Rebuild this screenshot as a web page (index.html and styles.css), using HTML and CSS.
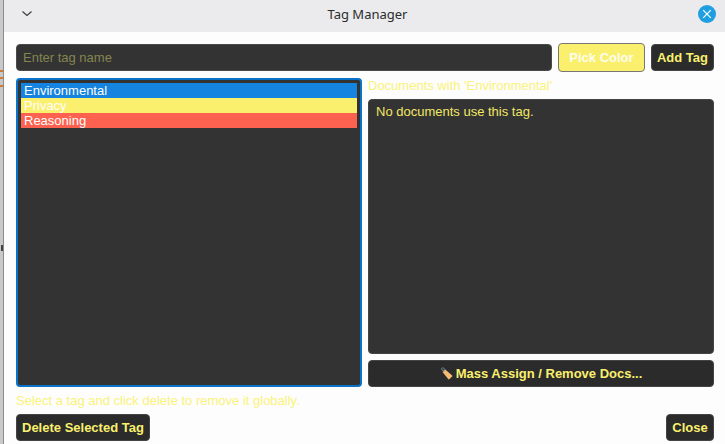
FILE: index.html
```html
<!DOCTYPE html>
<html lang="en">
<head>
    <meta charset="UTF-8">
    <title>Tag Manager</title>
    <link rel="stylesheet" href="styles.css">
</head>
<body>
    <div class="behind">
        <span class="behind-mark mark-1"></span>
        <span class="behind-mark mark-2"></span>
        <span class="behind-mark mark-3"></span>
        <span class="behind-blot"></span>
    </div>
    <div class="window">
        <div class="titlebar">
            <svg class="chevron" width="14" height="8" viewBox="0 0 14 8">
                <path d="M2.5 1.5 L7 5.5 L11.5 1.5" fill="none" stroke="#3a3a3a" stroke-width="1.1"/>
            </svg>
            <div class="title">Tag Manager</div>
            <div class="close-x">
                <svg width="18" height="18" viewBox="0 0 18 18">
                    <circle cx="9" cy="9" r="9" fill="#1f9fe0"/>
                    <path d="M5.2 5.2 L12.8 12.8 M12.8 5.2 L5.2 12.8" stroke="#fff" stroke-width="1.2"/>
                </svg>
            </div>
        </div>
        <div class="content">
            <div class="top-row">
                <input class="tag-input" type="text" placeholder="Enter tag name">
                <button class="button pick-btn">Pick Color</button>
                <button class="button">Add Tag</button>
            </div>
            <div class="columns">
                <div class="tag-list">
                    <div class="tag tag-blue">Environmental</div>
                    <div class="tag tag-yellow">Privacy</div>
                    <div class="tag tag-red">Reasoning</div>
                </div>
                <div class="docs">
                    <div class="docs-label">Documents with 'Environmental'</div>
                    <div class="docs-box">No documents use this tag.</div>
                    <button class="button mass-btn">
                        <svg class="tag-icon" width="13" height="13" viewBox="0 0 13 13">
                            <path d="M2.5 5 L5.2 2.4 L12.2 8.6 Q12.6 9 12.2 9.4 L9.2 12.2 Q8.8 12.6 8.4 12.2 Z" fill="#f3bb74"/>
                            <path d="M4.4 4.4 L2 3 Q0.8 1.2 2.6 0.8 Q4.4 0.8 5 3" fill="none" stroke="#6f8796" stroke-width="1"/>
                        </svg>Mass Assign / Remove Docs...
                    </button>
                </div>
            </div>
            <div class="hint">Select a tag and click delete to remove it globally.</div>
            <div class="bottom-row">
                <button class="button">Delete Selected Tag</button>
                <button class="button close-btn">Close</button>
            </div>
        </div>
    </div>
</body>
</html>
```

FILE: styles.css
```css
* {
    margin: 0;
    padding: 0;
    box-sizing: border-box;
}

body {
    width: 725px;
    height: 444px;
    overflow: hidden;
    display: flex;
    font-family: "Liberation Sans", Arial, sans-serif;
    font-size: 13px;
    background: #fdfdfd;
}

/* sliver of the app behind the dialog */
.behind {
    position: relative;
    width: 4px;
    flex-shrink: 0;
    background: #c9c9c9;
    border-right: 1px solid #8c8c8c;
}

.behind-mark {
    position: absolute;
    left: 0;
    width: 3px;
    height: 2px;
    background: #d9792b;
}

.mark-1 { top: 70px; }
.mark-2 { top: 77px; }
.mark-3 { top: 85px; }

.behind-blot {
    position: absolute;
    left: 1px;
    top: 245px;
    width: 2px;
    height: 6px;
    background: #444;
}

.window {
    flex: 1;
    display: flex;
    flex-direction: column;
    min-width: 0;
}

.titlebar {
    position: relative;
    height: 32px;
    padding: 0 0 4px 6px;
    background: #ebebed;
    display: flex;
    align-items: center;
    justify-content: center;
}

.chevron {
    position: absolute;
    left: 16px;
    top: 10px;
}

.title {
    font-family: "Noto Sans", sans-serif;
    font-size: 13px;
    color: #2c2c2c;
}

.close-x {
    position: absolute;
    right: 9px;
    top: 5px;
    height: 18px;
}

.content {
    flex: 1;
    display: flex;
    flex-direction: column;
    padding: 11px 11px 3px 12px;
    min-height: 0;
}

.top-row {
    display: flex;
    align-items: center;
    gap: 6px;
    height: 29px;
}

.tag-input {
    flex: 1;
    height: 27px;
    min-width: 0;
    padding: 0 6px;
    background: #333333;
    border: 1px solid #4a4a4a;
    border-radius: 4px;
    font-family: inherit;
    font-size: 13px;
    color: #faf06e;
    outline: none;
}

.tag-input::placeholder {
    color: #85854f;
    opacity: 1;
}

.button {
    height: 27px;
    padding: 0 5px;
    background: #2b2b2b;
    border: 1px solid #444;
    border-radius: 4px;
    font-family: inherit;
    font-size: 13px;
    font-weight: bold;
    color: #faf06e;
    white-space: nowrap;
    cursor: pointer;
}

.pick-btn {
    width: 87px;
    height: 29px;
    background: #faf06e;
    border-color: #777;
    color: #fdfdf0;
}

.close-btn {
    width: 48px;
}

.columns {
    display: grid;
    grid-template-columns: 1fr 1fr;
    gap: 6px;
    height: 309px;
    margin-top: 6px;
}

.tag-list {
    min-width: 0;
    padding: 3px;
    background: #333333;
    border: 2px solid #0a72c8;
    border-radius: 4px;
}

.tag {
    height: 15px;
    padding-left: 3px;
    line-height: 15px;
    color: #fdfdfd;
}

.tag-blue { background: #1583e0; }
.tag-yellow { background: #faf06e; }
.tag-red { background: #fd6250; }

.docs {
    min-width: 0;
    display: flex;
    flex-direction: column;
}

.docs-label {
    height: 21px;
    line-height: 15px;
    color: #faf27a;
}

.docs-box {
    height: 255px;
    padding: 4px 7px;
    background: #333333;
    border: 1px solid #444;
    border-radius: 4px;
    line-height: 16px;
    color: #f2e766;
}

.mass-btn {
    margin-top: 6px;
}

.tag-icon {
    margin-right: 3px;
    vertical-align: -2px;
}

.hint {
    margin-top: 6px;
    height: 21px;
    line-height: 15px;
    color: #faf27a;
}

.bottom-row {
    display: flex;
    justify-content: space-between;
}
```
